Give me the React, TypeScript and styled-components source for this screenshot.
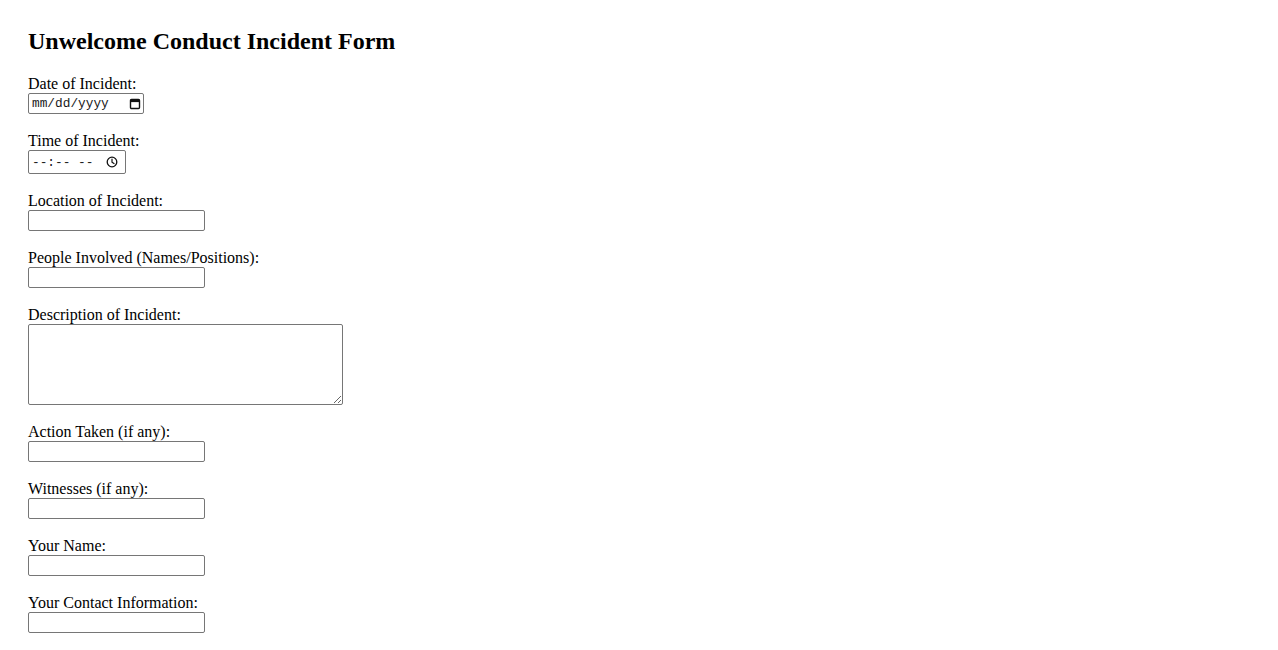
import React from "react";
import styled, { createGlobalStyle } from "styled-components";

const GlobalStyle = createGlobalStyle`
  html, body {
    margin: 0;
    padding: 0;
    background: #ffffff;
  }
  body {
    font-family: "Liberation Serif", "Times New Roman", serif;
    font-size: 16px;
    color: #000000;
  }
`;

const Page = styled.div`
  padding: 28px 28px 20px 28px;
`;

const Title = styled.h2`
  margin: 0 0 20px 0;
  font-size: 24px;
  line-height: 27px;
  font-weight: bold;
`;

const Form = styled.form`
  display: flex;
  flex-direction: column;
  align-items: flex-start;
  gap: 18px;
`;

const Field = styled.div`
  display: flex;
  flex-direction: column;
  align-items: flex-start;
`;

const Label = styled.label`
  display: block;
  font-size: 16px;
  line-height: 18px;
`;

const baseControl = `
  box-sizing: border-box;
  margin: 0;
  border: 1px solid #767676;
  border-radius: 2px;
  background: #ffffff;
  color: #000000;
  padding: 1px 2px;
  font-size: 13.333px;
  outline: none;
`;

const TextInput = styled.input`
  ${baseControl}
  width: 177px;
  height: 21px;
  font-family: "Liberation Sans", Arial, sans-serif;
`;

const PickerBox = styled.div<{ $w: number; $h: number; $padRight: number }>`
  ${baseControl}
  width: ${(p) => p.$w}px;
  height: ${(p) => p.$h}px;
  display: flex;
  align-items: center;
  justify-content: space-between;
  padding: 0 ${(p) => p.$padRight}px 0 3px;
  font-family: "Liberation Mono", "DejaVu Sans Mono", monospace;
  font-size: 12.8px;
  color: #1a1a1a;
`;

const PickerText = styled.span`
  white-space: pre;
`;

const IconWrap = styled.span`
  display: flex;
  align-items: center;
`;

const TextArea = styled.textarea`
  ${baseControl}
  width: 315px;
  height: 81px;
  font-family: "Liberation Mono", monospace;
  resize: both;
`;

const CalendarIcon = () => (
  <svg width="12" height="12" viewBox="0 0 12 12">
    <rect x="1.5" y="1.5" width="9" height="9" rx="1" fill="none" stroke="#111" strokeWidth="1.4" />
    <rect x="1.5" y="1.5" width="9" height="2.6" fill="#111" />
  </svg>
);

const ClockIcon = () => (
  <svg width="12" height="12" viewBox="0 0 12 12">
    <circle cx="6" cy="6" r="4.8" fill="none" stroke="#111" strokeWidth="1.3" />
    <path d="M6 3.2 V6.2 L8 7.6" fill="none" stroke="#111" strokeWidth="1.2" strokeLinecap="round" />
  </svg>
);

const textFields = [
  { id: "location", label: "Location of Incident:" },
  { id: "people", label: "People Involved (Names/Positions):" },
];

const laterFields = [
  { id: "action", label: "Action Taken (if any):" },
  { id: "witnesses", label: "Witnesses (if any):" },
  { id: "name", label: "Your Name:" },
  { id: "contact", label: "Your Contact Information:" },
];

export default function App() {
  return (
    <>
      <GlobalStyle />
      <Page>
        <Title>Unwelcome Conduct Incident Form</Title>
        <Form onSubmit={(e) => e.preventDefault()}>
          <Field>
            <Label htmlFor="date">Date of Incident:</Label>
            <PickerBox id="date" $w={116} $h={21} $padRight={2}>
              <PickerText>mm/dd/yyyy</PickerText>
              <IconWrap>
                <CalendarIcon />
              </IconWrap>
            </PickerBox>
          </Field>
          <Field>
            <Label htmlFor="time">Time of Incident:</Label>
            <PickerBox id="time" $w={98} $h={24} $padRight={7}>
              <PickerText>--:-- --</PickerText>
              <IconWrap>
                <ClockIcon />
              </IconWrap>
            </PickerBox>
          </Field>
          {textFields.map((f) => (
            <Field key={f.id}>
              <Label htmlFor={f.id}>{f.label}</Label>
              <TextInput id={f.id} type="text" />
            </Field>
          ))}
          <Field>
            <Label htmlFor="description">Description of Incident:</Label>
            <TextArea id="description" />
          </Field>
          {laterFields.map((f) => (
            <Field key={f.id}>
              <Label htmlFor={f.id}>{f.label}</Label>
              <TextInput id={f.id} type="text" />
            </Field>
          ))}
        </Form>
      </Page>
    </>
  );
}
